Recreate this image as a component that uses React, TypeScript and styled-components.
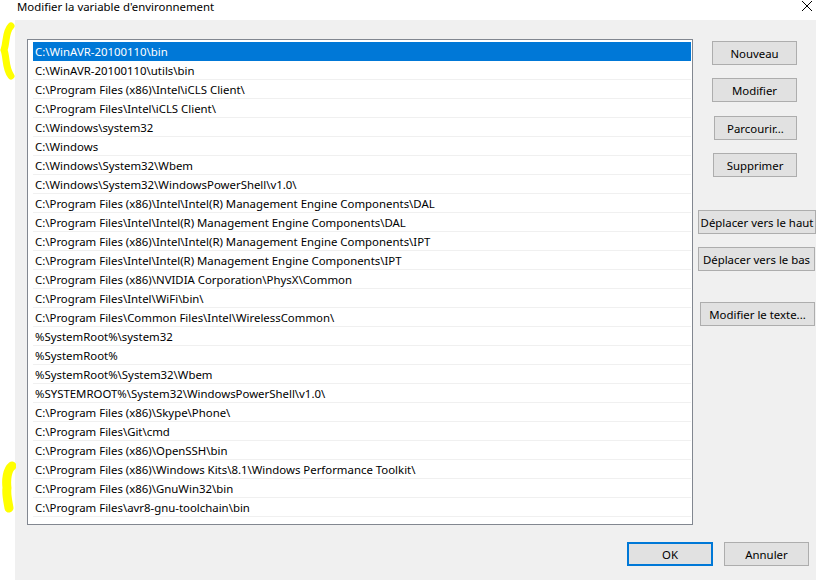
import * as React from "react";
import styled, { createGlobalStyle } from "styled-components";

const GlobalStyle = createGlobalStyle`
  html, body {
    margin: 0;
    padding: 0;
    background: #ffffff;
  }
  body {
    font-family: "Noto Sans", "Open Sans", sans-serif;
    font-size: 11.4px;
    color: #000000;
  }
`;

const paths = [
  "C:\\WinAVR-20100110\\bin",
  "C:\\WinAVR-20100110\\utils\\bin",
  "C:\\Program Files (x86)\\Intel\\iCLS Client\\",
  "C:\\Program Files\\Intel\\iCLS Client\\",
  "C:\\Windows\\system32",
  "C:\\Windows",
  "C:\\Windows\\System32\\Wbem",
  "C:\\Windows\\System32\\WindowsPowerShell\\v1.0\\",
  "C:\\Program Files (x86)\\Intel\\Intel(R) Management Engine Components\\DAL",
  "C:\\Program Files\\Intel\\Intel(R) Management Engine Components\\DAL",
  "C:\\Program Files (x86)\\Intel\\Intel(R) Management Engine Components\\IPT",
  "C:\\Program Files\\Intel\\Intel(R) Management Engine Components\\IPT",
  "C:\\Program Files (x86)\\NVIDIA Corporation\\PhysX\\Common",
  "C:\\Program Files\\Intel\\WiFi\\bin\\",
  "C:\\Program Files\\Common Files\\Intel\\WirelessCommon\\",
  "%SystemRoot%\\system32",
  "%SystemRoot%",
  "%SystemRoot%\\System32\\Wbem",
  "%SYSTEMROOT%\\System32\\WindowsPowerShell\\v1.0\\",
  "C:\\Program Files (x86)\\Skype\\Phone\\",
  "C:\\Program Files\\Git\\cmd",
  "C:\\Program Files (x86)\\OpenSSH\\bin",
  "C:\\Program Files (x86)\\Windows Kits\\8.1\\Windows Performance Toolkit\\",
  "C:\\Program Files (x86)\\GnuWin32\\bin",
  "C:\\Program Files\\avr8-gnu-toolchain\\bin",
];

const Page = styled.div`
  position: relative;
  width: 816px;
  height: 580px;
  display: flex;
  flex-direction: column;
  overflow: hidden;
`;

const TitleBar = styled.div`
  height: 20px;
  display: flex;
  align-items: flex-start;
  justify-content: space-between;
  padding-left: 17px;
  padding-right: 3px;
  box-sizing: border-box;
`;

const Title = styled.span`
  font-size: 11.4px;
  line-height: 13px;
`;

const CloseGlyph = styled.svg`
  margin-top: 0;
`;

const Body = styled.div`
  flex: 1;
  margin-left: 15px;
  background: #f0f0f0;
  display: flex;
  flex-direction: column;
`;

const Main = styled.div`
  display: flex;
  align-items: flex-start;
  padding-top: 19px;
  padding-left: 12px;
`;

const ListBox = styled.div`
  width: 664px;
  height: 482px;
  border: 1px solid #828790;
  background: #ffffff;
  padding: 2px 0 0 5px;
  box-sizing: content-box;
  display: flex;
  flex-direction: column;
`;

const Row = styled.div<{ $selected?: boolean }>`
  height: 19px;
  width: 658px;
  box-sizing: border-box;
  padding-left: 2px;
  display: flex;
  align-items: center;
  white-space: nowrap;
  border-bottom: 1px solid ${(p) => (p.$selected ? "#0078d7" : "#f0f0f0")};
  background: ${(p) => (p.$selected ? "#0078d7" : "transparent")};
  color: ${(p) => (p.$selected ? "#ffffff" : "#000000")};
`;

const Side = styled.div`
  display: flex;
  flex-direction: column;
  align-items: flex-start;
  margin-left: 5px;
`;

const Button = styled.button<{ $left: number; $top: number; $width: number; $default?: boolean }>`
  margin-left: ${(p) => p.$left}px;
  margin-top: ${(p) => p.$top}px;
  width: ${(p) => p.$width}px;
  height: 24px;
  padding: 0;
  font-family: inherit;
  font-size: 11.4px;
  color: #000000;
  background: #e1e1e1;
  border: ${(p) => (p.$default ? "2px solid #0078d7" : "1px solid #adadad")};
  white-space: nowrap;
`;

const Footer = styled.div`
  display: flex;
  justify-content: flex-end;
  gap: 11px;
  padding-top: 17px;
  padding-right: 7px;
`;

const Marker = styled.svg`
  position: absolute;
  left: 0;
`;

export default function App() {
  return (
    <Page>
      <GlobalStyle />
      <TitleBar>
        <Title>Modifier la variable d'environnement</Title>
        <CloseGlyph width="12" height="12" viewBox="0 0 12 12">
          <path d="M1 1L11 11M11 1L1 11" stroke="#000" strokeWidth="1" fill="none" />
        </CloseGlyph>
      </TitleBar>
      <Body>
        <Main>
          <ListBox>
            {paths.map((p, i) => (
              <Row key={i} $selected={i === 0}>
                {p}
              </Row>
            ))}
          </ListBox>
          <Side>
            <Button $left={14} $top={2} $width={85}>Nouveau</Button>
            <Button $left={14} $top={13} $width={85}>Modifier</Button>
            <Button $left={16} $top={14} $width={83}>Parcourir...</Button>
            <Button $left={15} $top={13} $width={84}>Supprimer</Button>
            <Button $left={0} $top={33} $width={118}>Déplacer vers le haut</Button>
            <Button $left={0} $top={13} $width={117}>Déplacer vers le bas</Button>
            <Button $left={2} $top={31} $width={115}>Modifier le texte...</Button>
          </Side>
        </Main>
        <Footer>
          <Button $left={0} $top={0} $width={86} $default>OK</Button>
          <Button $left={0} $top={0} $width={85}>Annuler</Button>
        </Footer>
      </Body>
      <Marker style={{ top: 22 }} width="15" height="58" viewBox="0 0 15 58">
        <path d="M11 4 C5 10 7 20 4 28 C7 36 5 46 11 54" stroke="#ffff00" strokeWidth="7" fill="none" strokeLinecap="round" />
      </Marker>
      <Marker style={{ top: 460 }} width="16" height="54" viewBox="0 0 16 54">
        <path d="M12 6 C7 10 6 20 7 28 C6 34 8 42 9 48" stroke="#ffff00" strokeWidth="9" fill="none" strokeLinecap="round" />
      </Marker>
    </Page>
  );
}
